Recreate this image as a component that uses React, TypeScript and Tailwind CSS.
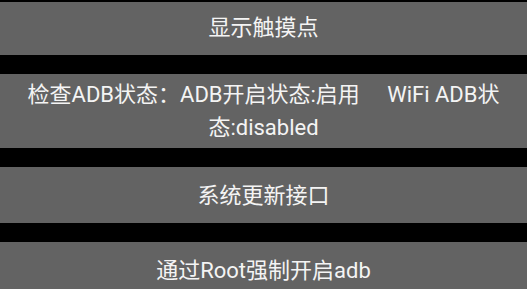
import React from 'react'

const font = { fontFamily: 'Roboto, "Noto Sans CJK SC", sans-serif' }

function Btn({ children, h }: { children: React.ReactNode; h: string }) {
  return (
    <button
      className={`w-full ${h} shrink-0 bg-[#636363] text-[#f4f4f4] text-[22px] leading-[33px] flex items-center justify-center text-center px-6`}
      style={font}
    >
      {children}
    </button>
  )
}

export default function App() {
  return (
    <div className="w-[527px] h-[289px] overflow-hidden bg-black flex flex-col gap-[19px] pt-[2px]">
      <Btn h="h-[53px] pb-[3px]">显示触摸点</Btn>
      <Btn h="h-[74px]">
        <span className="whitespace-pre-wrap">检查ADB状态：ADB开启状态:启用     WiFi ADB状态:disabled</span>
      </Btn>
      <Btn h="h-[56px]">系统更新接口</Btn>
      <Btn h="h-[56px]">通过Root强制开启adb</Btn>
    </div>
  )
}
